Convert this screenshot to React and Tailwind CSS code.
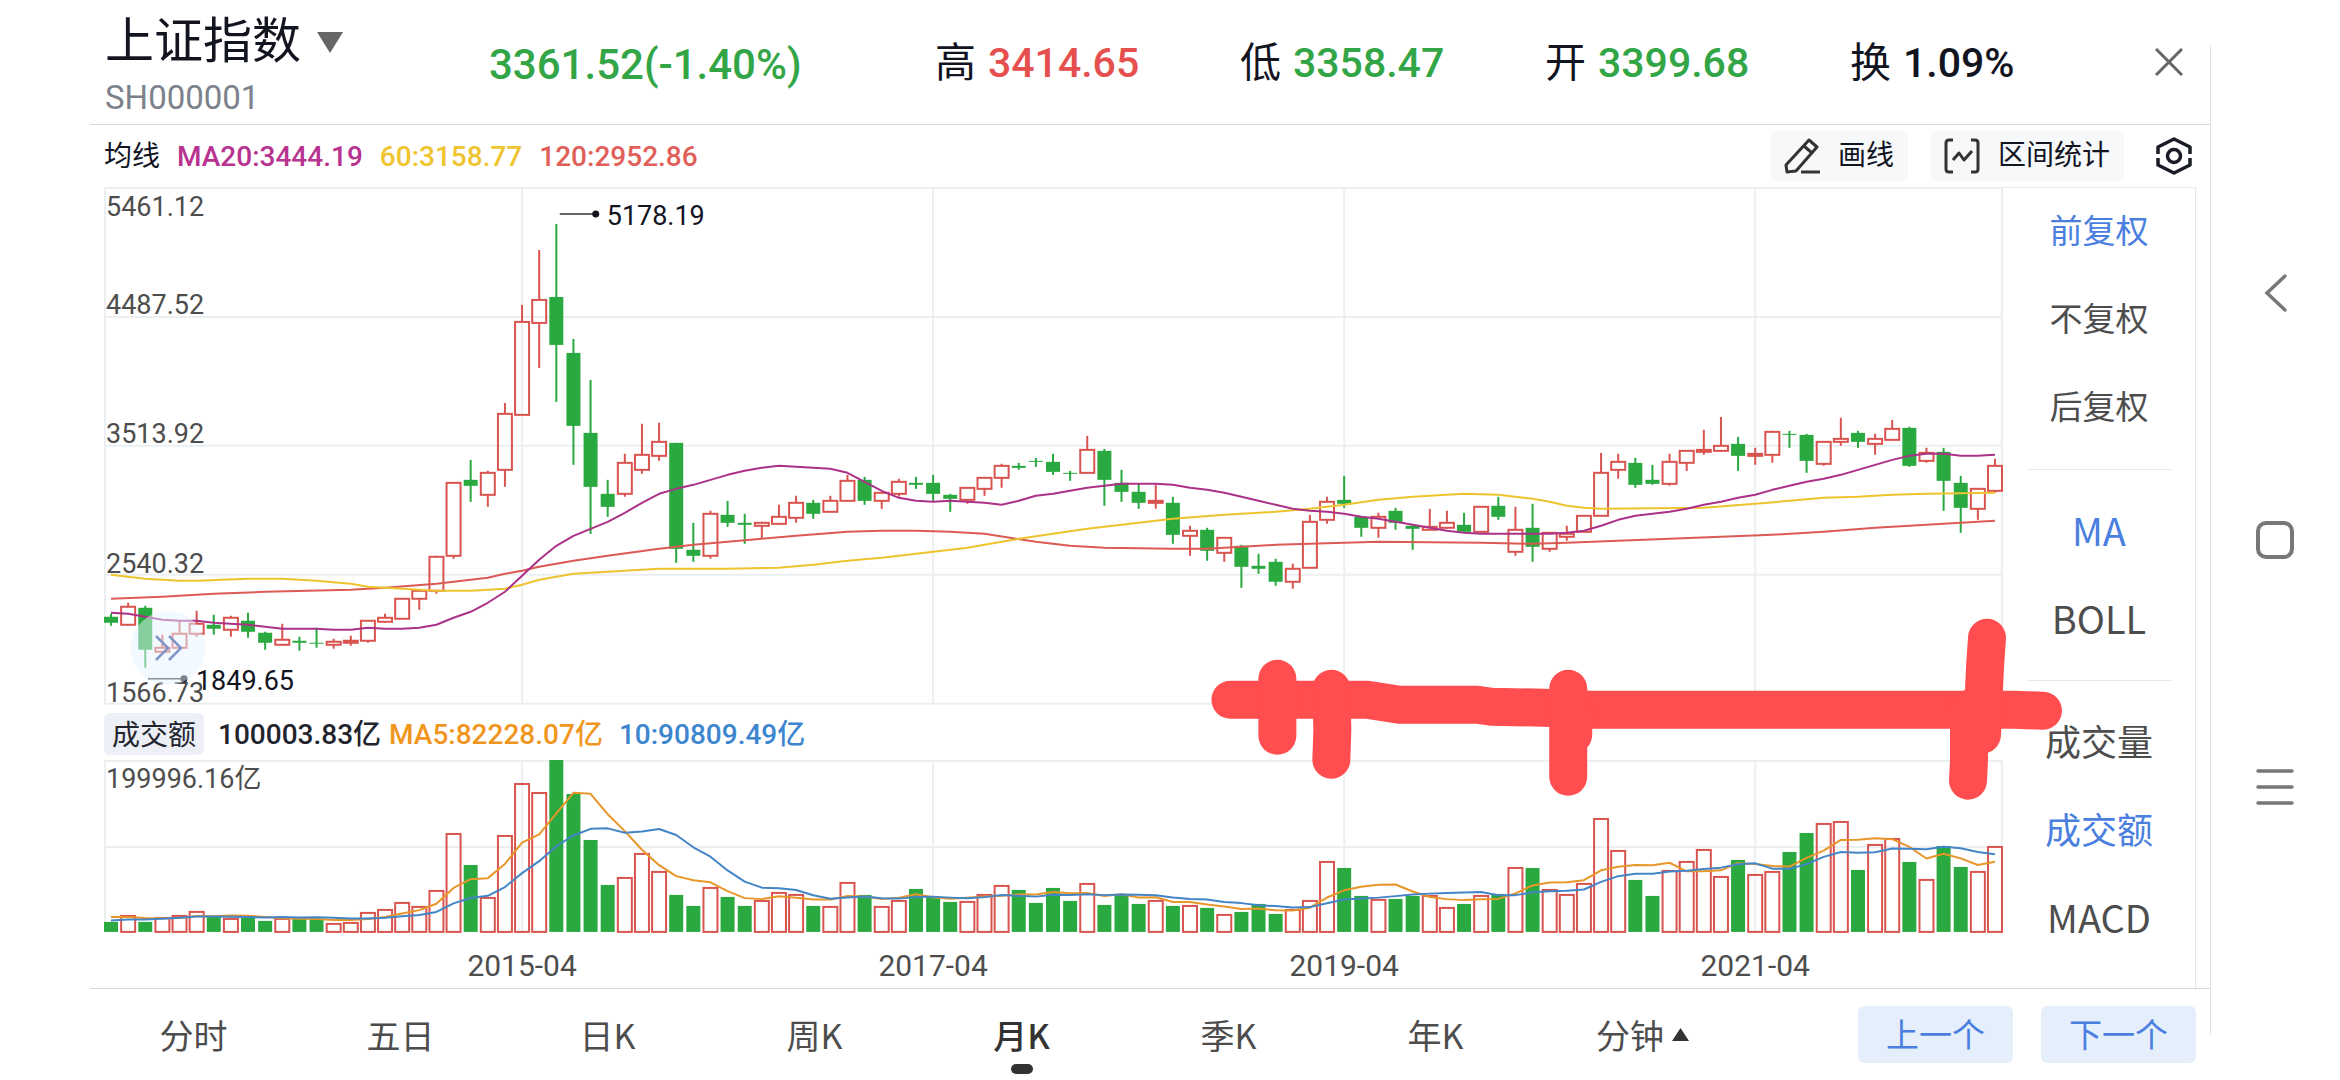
import { useState } from 'react';
import clsx from 'clsx';

const UP = '#d9544f';
const DOWN = '#29a93f';
const GRID = '#eceff2';

// [direction, high, body top, body bottom, low], one row per month
const candles = [
    ['d', 614, 617, 623, 626], ['u', 603, 607, 625, 626], ['d', 606, 608, 650, 668], ['u', 635, 648, 652, 652],
    ['u', 621, 634, 648, 648], ['u', 611, 624, 634, 637], ['d', 615, 625, 629, 635], ['u', 616, 618, 630, 637],
    ['d', 613, 621, 632, 638], ['d', 632, 633, 643, 650], ['u', 624, 640, 645, 646], ['d', 637, 641, 643, 651],
    ['d', 628, 643, 644, 648], ['u', 639, 642, 645, 649], ['u', 636, 641, 643, 646], ['u', 621, 621, 641, 643],
    ['u', 614, 618, 622, 623], ['u', 599, 599, 619, 619], ['u', 591, 591, 599, 610], ['u', 556, 557, 591, 594],
    ['u', 483, 483, 556, 559], ['d', 460, 480, 486, 502], ['u', 471, 473, 495, 507], ['u', 403, 414, 470, 487],
    ['u', 305, 322, 415, 415], ['u', 250, 300, 323, 368], ['d', 224, 297, 345, 402], ['d', 339, 353, 426, 465],
    ['d', 380, 433, 487, 534], ['d', 480, 494, 507, 517], ['u', 454, 463, 494, 497], ['u', 424, 455, 470, 474],
    ['u', 423, 442, 456, 461], ['d', 443, 443, 549, 563], ['d', 523, 550, 556, 562], ['u', 511, 514, 556, 559],
    ['d', 501, 515, 523, 527], ['d', 514, 523, 525, 544], ['u', 522, 523, 526, 539], ['u', 505, 517, 524, 525],
    ['u', 496, 503, 518, 523], ['d', 500, 503, 514, 519], ['u', 496, 501, 512, 512], ['u', 475, 481, 501, 501],
    ['d', 477, 480, 501, 505], ['u', 493, 493, 501, 509], ['u', 479, 482, 494, 497], ['d', 477, 483, 485, 489],
    ['d', 475, 483, 494, 501], ['d', 494, 495, 499, 512], ['u', 488, 488, 500, 504], ['u', 478, 478, 489, 496],
    ['u', 464, 466, 478, 488], ['d', 463, 466, 468, 470], ['d', 458, 461, 462, 467], ['d', 454, 462, 472, 475],
    ['d', 471, 473, 474, 481], ['u', 436, 450, 473, 473], ['d', 449, 451, 480, 506], ['d', 470, 483, 492, 502],
    ['d', 484, 492, 503, 509], ['u', 485, 501, 503, 509], ['d', 497, 503, 535, 544], ['u', 526, 531, 536, 556],
    ['d', 528, 530, 551, 561], ['u', 538, 538, 553, 562], ['d', 545, 546, 567, 588], ['d', 554, 566, 569, 574],
    ['d', 559, 562, 582, 586], ['u', 564, 569, 582, 589], ['u', 515, 522, 568, 568], ['u', 497, 502, 520, 524],
    ['d', 476, 500, 504, 508], ['d', 517, 517, 528, 537], ['u', 513, 517, 528, 538], ['d', 508, 511, 523, 530],
    ['d', 525, 526, 529, 550], ['u', 509, 527, 530, 530], ['u', 511, 523, 528, 529], ['d', 513, 525, 532, 532],
    ['u', 507, 507, 532, 532], ['d', 497, 506, 517, 520], ['u', 507, 530, 552, 556], ['d', 504, 528, 547, 562],
    ['u', 533, 533, 549, 552], ['u', 526, 534, 537, 541], ['u', 516, 516, 532, 532], ['u', 453, 473, 516, 516],
    ['u', 454, 462, 470, 479], ['d', 458, 463, 485, 488], ['d', 465, 480, 484, 485], ['u', 454, 462, 484, 486],
    ['u', 451, 451, 463, 471], ['u', 430, 450, 452, 455], ['u', 417, 446, 451, 452], ['d', 437, 444, 456, 471],
    ['u', 448, 454, 456, 465], ['u', 431, 432, 455, 463], ['d', 431, 434, 435, 448], ['d', 434, 435, 461, 473],
    ['u', 442, 442, 464, 466], ['u', 418, 439, 442, 446], ['d', 431, 433, 442, 448], ['u', 434, 439, 444, 455],
    ['u', 420, 429, 440, 440], ['d', 427, 428, 466, 467], ['u', 448, 453, 461, 463], ['d', 448, 452, 481, 511],
    ['d', 476, 483, 508, 533], ['u', 489, 489, 509, 520], ['u', 459, 466, 491, 493],
];

const ma20 = [
    613, 614, 617, 620, 621, 621, 623, 624, 625, 627, 629, 629, 629, 630, 630, 628, 629, 629, 628, 625,
    618, 612, 603, 592, 576, 560, 546, 536, 529, 522, 513, 503, 494, 489, 485, 480, 475, 471, 468, 466,
    467, 468, 469, 473, 482, 491, 498, 501, 502, 501, 502, 503, 505, 501, 496, 494, 491, 488, 486, 484,
    484, 484, 485, 488, 490, 493, 497, 501, 505, 509, 511, 512, 514, 517, 519, 522, 525, 528, 531, 533,
    534, 534, 534, 534, 534, 533, 531, 526, 520, 516, 514, 512, 509, 505, 502, 498, 495, 490, 486, 482,
    479, 475, 470, 465, 460, 456, 454, 454, 456, 456, 455,
].map((y, i) => [i, y]);

const ma60 = [
    [0, 575], [1, 577], [2, 579], [4, 581], [5, 581], [8, 579], [10, 579], [12, 581], [14, 584], [15, 587],
    [17, 589], [19, 591], [21, 591], [23, 589], [24, 585], [25, 580], [26, 577], [27, 574], [29, 572], [31, 570],
    [32, 569], [36, 569], [39, 568], [41, 565], [43, 561], [45, 558], [47, 554], [50, 548], [52, 542], [53, 539],
    [55, 534], [57, 529], [59, 525], [62, 519], [65, 515], [68, 512], [70, 509], [72, 505], [74, 500], [76, 497],
    [78, 495], [79, 494], [81, 495], [83, 499], [84, 502], [85, 506], [86, 508], [87, 509], [93, 508], [96, 504],
    [98, 501], [100, 498], [102, 497], [104, 495], [106, 494], [110, 493],
];

const ma120 = [
    [0, 599], [3, 597], [6, 594], [9, 592], [14, 590], [16, 588], [19, 584], [21, 580], [22, 578], [23, 574],
    [24, 571], [25, 567], [26, 564], [27, 561], [29, 556], [32, 549], [34, 545], [36, 542], [38, 539], [40, 536],
    [43, 532], [45, 531], [47, 531], [49, 532], [51, 534], [54, 542], [56, 546], [58, 548], [62, 549], [64, 549],
    [66, 547], [68, 545], [70, 544], [72, 543], [74, 542], [80, 543], [83, 544], [85, 543], [88, 541], [91, 539],
    [94, 537], [97, 535], [100, 532], [103, 528], [106, 525], [108, 523], [110, 521],
];

const turnover = [
    922, 915, 922, 917, 915, 911, 917, 918, 918, 921, 918, 919, 919, 923, 922, 912, 909, 902, 906, 890,
    833, 865, 897, 835, 783, 792, 760, 794, 840, 885, 877, 853, 871, 895, 906, 887, 897, 906, 900, 892,
    894, 906, 906, 882, 895, 906, 900, 889, 897, 902, 901, 894, 885, 890, 903, 888, 901, 883, 905, 895,
    904, 900, 906, 905, 908, 914, 912, 904, 914, 909, 900, 861, 868, 896, 899, 899, 896, 895, 907, 904,
    895, 894, 867, 868, 889, 894, 883, 818, 850, 880, 896, 870, 861, 849, 876, 860, 874, 871, 852, 833,
    823, 821, 870, 844, 838, 862, 879, 846, 867, 871, 846,
];
// months before the visible range, needed by the averages
const history = [924, 924, 924, 924, 924, 916, 916, 916, 916];

const centerX = i => 111 + (i * 1885) / 110;

const toPoints = pairs => pairs.map(([i, y]) => `${centerX(i)},${y}`).join(' ');

function average(n) {
    const all = [...history, ...turnover];
    return turnover.map((_, i) => {
        const end = i + history.length + 1;
        return [i, all.slice(end - n, end).reduce((a, b) => a + b, 0) / n];
    });
}

const years = [
    { index: 24, label: '2015-04' },
    { index: 48, label: '2017-04' },
    { index: 72, label: '2019-04' },
    { index: 96, label: '2021-04' },
];

const priceLabels = [
    { y: 216, text: '5461.12' },
    { y: 314, text: '4487.52' },
    { y: 443, text: '3513.92' },
    { y: 573, text: '2540.32' },
    { y: 702, text: '1566.73' },
];

const quotes = [
    { label: '高', value: '3414.65', color: 'text-[#e5504e]' },
    { label: '低', value: '3358.47', color: 'text-[#32a546]' },
    { label: '开', value: '3399.68', color: 'text-[#32a546]' },
    { label: '换', value: '1.09%', color: 'text-[#12141f]' },
];

const sideGroups = [
    { name: 'adjust', size: 'text-[33px]', items: ['前复权', '不复权', '后复权'] },
    { name: 'main', size: 'text-[38px]', items: ['MA', 'BOLL'] },
    { name: 'sub', size: 'text-[36px]', items: ['成交量', '成交额', 'MACD'] },
];

const periods = ['分时', '五日', '日K', '周K', '月K', '季K', '年K', '分钟'];

function Candle({ row, i }) {
    const [dir, high, top, bottom, low] = row;
    const x = centerX(i);
    if (dir === 'd') {
        return (
            <g fill={DOWN}>
                <rect x={x - 1} y={high} width="2" height={low - high} />
                <rect x={x - 7} y={top} width="14" height={bottom - top} />
            </g>
        );
    }
    return (
        <g stroke={UP} strokeWidth="2" fill="none">
            <path d={`M${x} ${high}V${top}M${x} ${bottom}V${low}`} />
            <rect x={x - 7} y={top} width="14" height={bottom - top} />
        </g>
    );
}

function PriceChart() {
    return (
        <svg viewBox="104 187 1900 518" className="block h-auto w-full overflow-visible" role="img" aria-label="月K线">
            <g stroke={GRID} strokeWidth="2" fill="none">
                <rect x="105" y="188" width="1898" height="516" />
                <path d="M104 317H2003M104 446H2003M104 575H2003" />
                {years.map(({ index }) => <path key={index} d={`M${centerX(index)} 188V704`} />)}
            </g>
            {candles.map((row, i) => <Candle key={i} row={row} i={i} />)}
            <g fill="none" strokeWidth="2" strokeLinejoin="round">
                <polyline points={toPoints(ma120)} stroke="#dc5a55" />
                <polyline points={toPoints(ma60)} stroke="#eec42e" />
                <polyline points={toPoints(ma20)} stroke="#ab3288" />
            </g>
            <g className="text-[27px]" fill="#4d4d4d">
                {priceLabels.map(({ y, text }) => <text key={text} x="106" y={y}>{text}</text>)}
            </g>
            <g className="text-[27px]" fill="#12141f">
                <path d="M560 214H596M148 679H184" stroke="#333" strokeWidth="1.5" />
                <circle cx="596" cy="214" r="3.5" />
                <circle cx="184" cy="679" r="3.5" />
                <text x="607" y="225">5178.19</text>
                <text x="196" y="690">1849.65</text>
            </g>
        </svg>
    );
}

function TurnoverChart() {
    return (
        <svg viewBox="104 760 1900 228" className="block h-auto w-full" role="img" aria-label="成交额">
            <g stroke={GRID} strokeWidth="2" fill="none">
                <path d="M105 932V761H2003V932M104 847H2003" />
                {years.map(({ index }) => <path key={index} d={`M${centerX(index)} 761V932`} />)}
            </g>
            {turnover.map((y, i) => candles[i][0] === 'd'
                ? <rect key={i} x={centerX(i) - 7} y={y} width="14" height={932 - y} fill={DOWN} />
                : <rect key={i} x={centerX(i) - 7} y={y + 1} width="14" height={931 - y} fill="none" stroke={UP} strokeWidth="2" />
            )}
            <g fill="none" strokeWidth="2" strokeLinejoin="round">
                <polyline points={toPoints(average(5))} stroke="#e8962a" />
                <polyline points={toPoints(average(10))} stroke="#4385c6" />
            </g>
            <text x="106" y="788" className="text-[27px]" fill="#4d4d4d">199996.16亿</text>
            <g className="text-[30px]" fill="#4d4d4d" textAnchor="middle">
                {years.map(({ index, label }) => <text key={label} x={centerX(index)} y="976">{label}</text>)}
            </g>
        </svg>
    );
}

// freehand strokes drawn over the charts
function Marker() {
    return (
        <svg viewBox="104 187 1900 801" className="pointer-events-none absolute inset-0 h-full w-full overflow-visible" aria-hidden="true">
            <g fill="none" stroke="#ff4d50" strokeWidth="38" strokeLinecap="round" strokeLinejoin="round">
                <path d="M1231 700H1368L1400 705H1478L1492 707L1545 708L1590 710H2015L2044 711" />
                <path d="M1278 679V736" />
                <path d="M1332 689L1333 730L1332 760" />
                <path d="M1569 689V777M1574 709V735" />
                <path d="M1988 638L1986 667L1983 735M1970 709V760L1969 781" />
            </g>
        </svg>
    );
}

function Header() {
    return (
        <header className="flex border-b border-[#d6d8da] pr-[27px] pl-[15px] text-[#12141f]">
            <div className="w-[384px] pt-3">
                <button type="button" className="flex items-center gap-4 text-[49px] leading-[60px]">
                    上证指数
                    <svg width="26" height="21" viewBox="0 0 26 21" fill="#666"><path d="M0 0H26L13 21Z" /></svg>
                </button>
                <p className="text-[33px] leading-[52px] text-[#7d818c]">SH000001</p>
            </div>
            <p className="w-[446px] self-center pt-1 text-[42px] font-medium text-[#32a546]">3361.52(-1.40%)</p>
            <dl className="grid flex-1 grid-cols-4 items-center pt-1 text-[41px]">
                {quotes.map(q => (
                    <div key={q.label} className="flex gap-3">
                        <dt>{q.label}</dt>
                        <dd className={clsx('font-medium', q.color)}>{q.value}</dd>
                    </div>
                ))}
            </dl>
            <button type="button" aria-label="关闭" className="self-center">
                <svg width="28" height="28" viewBox="0 0 28 28" stroke="#666" strokeWidth="3" fill="none"><path d="M1 1L27 27M27 1L1 27" /></svg>
            </button>
        </header>
    );
}

function Legend() {
    return (
        <div className="flex h-[62px] items-center pr-[18px] pl-[14px] text-[28px] text-[#12141f]">
            <div className="flex flex-1 gap-[17px] pt-0.5 font-medium">
                <span className="font-normal">均线</span>
                <span className="text-[#b8338f]">MA20:3444.19</span>
                <span className="text-[#efc42f]">60:3158.77</span>
                <span className="text-[#e06059]">120:2952.86</span>
            </div>
            <button type="button" className="flex h-[50px] items-center gap-[18px] rounded-md bg-[#f6f8fa] px-[14px]">
                <svg width="36" height="36" viewBox="0 0 36 36" fill="none" stroke="#333" strokeWidth="3" strokeLinejoin="round">
                    <path d="M25 2L33 9L12 33L3 34L2 27ZM20 8L28 15" />
                    <path d="M17 34H36" />
                </svg>
                画线
            </button>
            <button type="button" className="ml-[22px] flex h-[50px] items-center gap-[18px] rounded-md bg-[#f6f8fa] px-[14px]">
                <svg width="36" height="36" viewBox="0 0 36 36" fill="none" stroke="#333" strokeWidth="3" strokeLinejoin="round">
                    <path d="M9 2H5Q2 2 2 5V31Q2 34 5 34H9M27 2H31Q34 2 34 5V31Q34 34 31 34H27" />
                    <path d="M9 22L15 15L20 22L28 13" />
                </svg>
                区间统计
            </button>
            <button type="button" aria-label="设置" className="ml-8">
                <svg width="36" height="38" viewBox="0 0 36 38" fill="none" stroke="#1a1c26" strokeWidth="3.5" strokeLinejoin="round">
                    <path d="M2 17V10L18 2L34 10V17M2 21V28L18 36L34 28V21" />
                    <circle cx="18" cy="19" r="6.5" />
                </svg>
            </button>
        </div>
    );
}

function SidePanel() {
    const [active, setActive] = useState({ adjust: '前复权', main: 'MA', sub: '成交额' });

    return (
        <aside className="w-[193px] border-t border-r border-[#e4e8ec] font-['Noto_Sans_CJK_SC',sans-serif]">
            {sideGroups.map((group, n) => (
                <div key={group.name}>
                    {n > 0 && <hr className="mx-6 my-[17px] border-[#e4e8ec]" />}
                    {group.items.map(item => (
                        <button
                            key={item}
                            type="button"
                            onClick={() => setActive({ ...active, [group.name]: item })}
                            className={clsx(
                                'block h-[88px] w-full pb-1',
                                item === 'MACD' ? 'text-[38px]' : group.size,
                                active[group.name] === item ? 'text-[#4a7fe0]' : 'text-[#4d4d4d]'
                            )}
                        >
                            {item}
                        </button>
                    ))}
                </div>
            ))}
        </aside>
    );
}

function PeriodBar() {
    const [period, setPeriod] = useState('月K');

    return (
        <footer className="flex h-[92px] items-center border-t border-[#d6d8da] pr-[14px] font-['Noto_Sans_CJK_SC',sans-serif]">
            <nav className="grid h-full flex-1 grid-cols-8">
                {periods.map(p => (
                    <button
                        key={p}
                        type="button"
                        onClick={() => setPeriod(p)}
                        className={clsx('relative flex items-center justify-center gap-2 text-[34px]', p === period ? 'font-medium text-[#333]' : 'text-[#4d4d4d]')}
                    >
                        {p}
                        {p === '分钟' && <svg width="17" height="13" viewBox="0 0 17 13" fill="#333"><path d="M0 13H17L8.5 0Z" /></svg>}
                        {p === period && <span className="absolute bottom-[6px] left-1/2 h-[10px] w-[22px] -translate-x-1/2 rounded-full bg-[#333]" />}
                    </button>
                ))}
            </nav>
            <div className="ml-28 flex gap-7 text-[33px] text-[#4a7fe0]">
                <button type="button" className="h-[57px] w-[155px] rounded-md bg-[#e5effb]">上一个</button>
                <button type="button" className="h-[57px] w-[155px] rounded-md bg-[#e5effb]">下一个</button>
            </div>
        </footer>
    );
}

function SystemNav() {
    return (
        <nav className="flex w-[129px] flex-col items-center justify-center gap-[207px]">
            <button type="button" aria-label="返回">
                <svg width="40" height="40" viewBox="0 0 40 40" fill="none" stroke="#777" strokeWidth="3.5" strokeLinecap="round"><path d="M29 3L11 20L29 37" /></svg>
            </button>
            <button type="button" aria-label="主页">
                <svg width="40" height="40" viewBox="0 0 40 40" fill="none" stroke="#777" strokeWidth="4"><rect x="2" y="3" width="34" height="34" rx="8" /></svg>
            </button>
            <button type="button" aria-label="菜单">
                <svg width="40" height="40" viewBox="0 0 40 40" fill="none" stroke="#777" strokeWidth="3.5" strokeLinecap="round"><path d="M2 4H36M2 20H36M2 36H36" /></svg>
            </button>
        </nav>
    );
}

export default function App() {
    return (
        <div className="flex min-h-screen bg-white pl-[90px] font-[Roboto,'Noto_Sans_CJK_SC',sans-serif]">
            <main className="min-w-0 flex-1">
                <Header />
                <Legend />
                <div className="flex px-[14px]">
                    <section className="relative min-w-0 flex-1">
                        <div className="relative">
                            <PriceChart />
                            <button type="button" aria-label="展开" className="absolute bottom-5 left-[27px] flex size-[74px] items-center justify-center rounded-full bg-[#e6f3ff]/50">
                                <svg width="28" height="28" viewBox="0 0 28 28" fill="none" stroke="#8394c8" strokeWidth="2.5"><path d="M2 2L14 14L2 26M15 2L27 14L15 26" /></svg>
                            </button>
                        </div>
                        <div className="flex h-[55px] items-center pt-1 text-[28px] font-medium text-[#22242e]">
                            <button type="button" className="h-[42px] rounded-md bg-[#eceff5] px-2 pt-0.5 font-normal">成交额</button>
                            <span className="ml-[14px] pt-0.5">100003.83亿</span>
                            <span className="ml-2 pt-0.5 text-[#f0961e]">MA5:82228.07亿</span>
                            <span className="ml-4 pt-0.5 text-[#3d86cf]">10:90809.49亿</span>
                        </div>
                        <TurnoverChart />
                        <Marker />
                    </section>
                    <SidePanel />
                </div>
                <PeriodBar />
            </main>
            <div className="my-[46px] w-px bg-[#dfe1e4]" />
            <SystemNav />
        </div>
    );
}
